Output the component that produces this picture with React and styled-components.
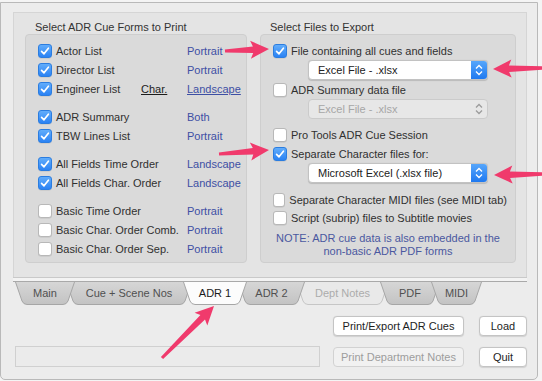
import React from "react";
import styled, { createGlobalStyle } from "styled-components";

const GlobalStyle = createGlobalStyle`
  html, body { margin: 0; padding: 0; background: #f4f4f4; }
  body {
    font-family: "Liberation Sans", Arial, sans-serif;
    font-size: 11px;
    color: #303030;
  }
  #root { width: 542px; height: 381px; overflow: hidden; }
`;

const Page = styled.div`
  position: relative;
  width: 542px;
  height: 381px;
  padding-top: 2px;
  box-sizing: border-box;
`;

const Window = styled.div`
  box-sizing: border-box;
  width: 538px;
  height: 378px;
  background: #ececec;
  border: 1px solid #b9b9b9;
  border-radius: 0 0 5px 5px;
  padding: 9px 10px 0 12px;
  display: flex;
  flex-direction: column;
`;

const Panel = styled.div`
  box-sizing: border-box;
  height: 265px;
  background: #e4e4e4;
  border: 1px solid #d5d5d5;
  border-bottom: none;
  padding: 7px 10px 14px 11px;
  display: flex;
  gap: 13px;
`;

const Column = styled.div`
  display: flex;
  flex-direction: column;
  width: ${(p) => p.$w}px;
`;

const Title = styled.div`
  height: 14px;
  line-height: 14px;
  padding-left: 10px;
  color: #333333;
`;

const GroupBox = styled.div`
  flex: 1;
  box-sizing: border-box;
  background: #dadada;
  border: 1px solid #cecece;
  border-radius: 4px;
  padding: 6px 8px 0 12px;
  display: flex;
  flex-direction: column;
`;

const FormRow = styled.div`
  display: grid;
  grid-template-columns: 18px 85px 46px auto;
  align-items: center;
  height: 19px;
  margin-top: ${(p) => p.$gap || 0}px;
`;

const CheckRow = styled.div`
  display: flex;
  align-items: center;
  gap: 4px;
  height: 19px;
  margin-top: ${(p) => p.$gap || 0}px;
`;

const Box = styled.span`
  box-sizing: border-box;
  width: 14px;
  height: 14px;
  border-radius: 3px;
  display: inline-flex;
  align-items: center;
  justify-content: center;
  background: ${(p) => (p.$on ? "linear-gradient(#62adfb, #2a82f4)" : "#ffffff")};
  border: 1px solid ${(p) => (p.$on ? "#2b7de0" : "#b8b8b8")};
  box-shadow: 0 0.5px 0.5px rgba(0, 0, 0, 0.12);
`;

const Label = styled.span`
  white-space: nowrap;
`;

const Char = styled.span`
  text-decoration: underline;
  color: #1c1c1c;
`;

const Orient = styled.span`
  color: #3d4fa4;
  white-space: nowrap;
  text-decoration: ${(p) => (p.$u ? "underline" : "none")};
`;

const Popup = styled.div`
  box-sizing: border-box;
  width: 180px;
  height: 20px;
  margin-left: 35px;
  margin-top: ${(p) => p.$gap || 0}px;
  display: flex;
  align-items: center;
  border-radius: 4px;
  background: ${(p) => (p.$off ? "#e7e7e7" : "#ffffff")};
  border: 1px solid ${(p) => (p.$off ? "#cbcbcb" : "#c2c2c2")};
  box-shadow: ${(p) => (p.$off ? "none" : "0 0.5px 1px rgba(0,0,0,0.15)")};
  color: ${(p) => (p.$off ? "#a6a6a6" : "#222222")};
  overflow: hidden;
`;

const PopupText = styled.span`
  flex: 1;
  padding-left: 9px;
`;

const Stepper = styled.span`
  width: 16px;
  height: 100%;
  display: flex;
  align-items: center;
  justify-content: center;
  background: ${(p) => (p.$off ? "transparent" : "linear-gradient(#56a6fb, #1f79f0)")};
`;

const Note = styled.div`
  margin-top: 5px;
  line-height: 13px;
  text-align: center;
  color: #4a58a0;
  padding-right: 4px;
`;

const Strip = styled.div`
  height: 3px;
  background: #f3f3f3;
  border-top: 1px solid #c9c9c9;
  border-bottom: 1px solid #a9a9a9;
`;

const TabRow = styled.div`
  display: flex;
  height: 23px;
  padding-left: 2px;
`;

const Tab = styled.div`
  position: relative;
  width: ${(p) => p.$w}px;
  height: 23px;
  margin-left: -9px;
  z-index: ${(p) => p.$z};
  display: flex;
  align-items: center;
  justify-content: center;
  padding-bottom: 1px;
  box-sizing: border-box;
  color: ${(p) => (p.$state === "off" ? "#acacac" : p.$state === "on" ? "#1a1a1a" : "#505050")};
  &:first-child { margin-left: 0; }
  svg { position: absolute; left: 0; top: 0; }
  span { position: relative; }
`;

const Bottom = styled.div`
  display: flex;
  align-items: flex-end;
  gap: 13px;
  padding: 11px 0 0 2px;
`;

const Field = styled.div`
  flex: 1;
  height: 21px;
  box-sizing: border-box;
  background: #ebebeb;
  border: 1px solid #d0d0d0;
`;

const ButtonGrid = styled.div`
  display: grid;
  grid-template-columns: 131px 48px;
  column-gap: 15px;
  row-gap: 11px;
`;

const Button = styled.div`
  box-sizing: border-box;
  height: 20px;
  display: flex;
  align-items: center;
  justify-content: center;
  border-radius: 4px;
  background: ${(p) => (p.$off ? "#f1f1f1" : "#ffffff")};
  border: 1px solid ${(p) => (p.$off ? "#d2d2d2" : "#c4c4c4")};
  box-shadow: ${(p) => (p.$off ? "none" : "0 0.5px 1px rgba(0,0,0,0.12)")};
  color: ${(p) => (p.$off ? "#9d9d9d" : "#1e1e1e")};
`;

const Overlay = styled.svg`
  position: absolute;
  left: 0;
  top: 0;
  pointer-events: none;
`;

function Check({ on }) {
  return (
    <Box $on={on}>
      {on && (
        <svg width="12" height="12" viewBox="0 0 12 12">
          <polyline points="2.6,6.4 5,8.8 9.4,3.2" fill="none" stroke="#fff" strokeWidth="1.7" strokeLinecap="round" strokeLinejoin="round" />
        </svg>
      )}
    </Box>
  );
}

function Select({ text, off, gap }) {
  const c = off ? "#9c9c9c" : "#ffffff";
  return (
    <Popup $off={off} $gap={gap}>
      <PopupText>{text}</PopupText>
      <Stepper $off={off}>
        <svg width="10" height="14" viewBox="0 0 10 14">
          <polyline points="2,5.5 5,2.5 8,5.5" fill="none" stroke={c} strokeWidth="1.3" />
          <polyline points="2,8.5 5,11.5 8,8.5" fill="none" stroke={c} strokeWidth="1.3" />
        </svg>
      </Stepper>
    </Popup>
  );
}

function TabShape({ w, state }) {
  const h = 23;
  const fill = state === "on" ? "#fcfcfc" : state === "off" ? "#e9e9e9" : "url(#tabgrad)";
  const stroke = state === "off" ? "#c6c6c6" : "#a6a6a6";
  const outline = `M0.5,0 L7,${h - 4} Q8.5,${h - 0.5} 12,${h - 0.5} L${w - 12},${h - 0.5} Q${w - 8.5},${h - 0.5} ${w - 7},${h - 4} L${w - 0.5},0`;
  return (
    <svg width={w} height={h} viewBox={`0 0 ${w} ${h}`}>
      <defs>
        <linearGradient id="tabgrad" x1="0" y1="0" x2="0" y2="1">
          <stop offset="0" stopColor="#d6d6d6" />
          <stop offset="1" stopColor="#c3c3c3" />
        </linearGradient>
      </defs>
      <path d={outline + " Z"} fill={fill} />
      <path d={outline} fill="none" stroke={stroke} strokeWidth="1" />
    </svg>
  );
}

function arrowPoints(x1, y1, x2, y2) {
  const dx = x2 - x1;
  const dy = y2 - y1;
  const len = Math.hypot(dx, dy);
  const ux = dx / len;
  const uy = dy / len;
  const px = -uy;
  const py = ux;
  const head = 16;
  const hw = 9;
  const sw = 3.3;
  const tw = 1.6;
  const bx = x2 - ux * head;
  const by = y2 - uy * head;
  const pts = [
    [x1 + px * tw, y1 + py * tw],
    [bx + px * sw, by + py * sw],
    [bx + px * hw - ux * 2.5, by + py * hw - uy * 2.5],
    [x2, y2],
    [bx - px * hw - ux * 2.5, by - py * hw - uy * 2.5],
    [bx - px * sw, by - py * sw],
    [x1 - px * tw, y1 - py * tw],
  ];
  return pts.map((p) => p.map((v) => v.toFixed(1)).join(",")).join(" ");
}

const forms = [
  [
    { label: "Actor List", on: true, orient: "Portrait" },
    { label: "Director List", on: true, orient: "Portrait" },
    { label: "Engineer List", on: true, char: true, orient: "Landscape", u: true },
  ],
  [
    { label: "ADR Summary", on: true, orient: "Both" },
    { label: "TBW Lines List", on: true, orient: "Portrait" },
  ],
  [
    { label: "All Fields Time Order", on: true, orient: "Landscape" },
    { label: "All Fields Char. Order", on: true, orient: "Landscape" },
  ],
  [
    { label: "Basic Time Order", orient: "Portrait" },
    { label: "Basic Char. Order Comb.", orient: "Portrait" },
    { label: "Basic Char. Order Sep.", orient: "Portrait" },
  ],
];

const tabs = [
  { label: "Main", w: 60, z: 3 },
  { label: "Cue + Scene Nos", w: 126, z: 2 },
  { label: "ADR 1", w: 64, z: 10, state: "on" },
  { label: "ADR 2", w: 67, z: 4 },
  { label: "Dept Notes", w: 93, z: 1, state: "off" },
  { label: "PDF", w: 60, z: 2 },
  { label: "MIDI", w: 51, z: 3 },
];

const arrows = [
  [225, 51, 269, 49],
  [543, 68, 493, 69],
  [219, 154, 269, 150],
  [543, 174, 494, 175],
  [162, 358, 214, 306],
];

export default function App() {
  return (
    <Page>
      <GlobalStyle />
      <Window>
        <Panel>
          <Column $w={222}>
            <Title>Select ADR Cue Forms to Print</Title>
            <GroupBox>
              {forms.map((group, gi) =>
                group.map((f, i) => (
                  <FormRow key={f.label} $gap={gi > 0 && i === 0 ? 9 : 0}>
                    <Check on={f.on} />
                    <Label>{f.label}</Label>
                    <span>{f.char && <Char>Char.</Char>}</span>
                    <Orient $u={f.u}>{f.orient}</Orient>
                  </FormRow>
                ))
              )}
            </GroupBox>
          </Column>
          <Column $w={256}>
            <Title>Select Files to Export</Title>
            <GroupBox>
              <CheckRow>
                <Check on />
                <Label>File containing all cues and fields</Label>
              </CheckRow>
              <Select text="Excel File - .xlsx" />
              <CheckRow>
                <Check />
                <Label>ADR Summary data file</Label>
              </CheckRow>
              <Select text="Excel File - .xlsx" off />
              <CheckRow $gap={6}>
                <Check />
                <Label>Pro Tools ADR Cue Session</Label>
              </CheckRow>
              <CheckRow>
                <Check on />
                <Label>Separate Character files for:</Label>
              </CheckRow>
              <Select text="Microsoft Excel (.xlsx file)" />
              <CheckRow $gap={7}>
                <Check />
                <Label>Separate Character MIDI files (see MIDI tab)</Label>
              </CheckRow>
              <CheckRow $gap={-1}>
                <Check />
                <Label>Script (subrip) files to Subtitle movies</Label>
              </CheckRow>
              <Note>
                NOTE: ADR cue data is also embedded in the
                <br />
                non-basic ADR PDF forms
              </Note>
            </GroupBox>
          </Column>
        </Panel>
        <Strip />
        <TabRow>
          {tabs.map((t) => (
            <Tab key={t.label} $w={t.w} $z={t.z} $state={t.state}>
              <TabShape w={t.w} state={t.state} />
              <span>{t.label}</span>
            </Tab>
          ))}
        </TabRow>
        <Bottom>
          <Field />
          <ButtonGrid>
            <Button>Print/Export ADR Cues</Button>
            <Button>Load</Button>
            <Button $off>Print Department Notes</Button>
            <Button>Quit</Button>
          </ButtonGrid>
        </Bottom>
      </Window>
      <Overlay width="542" height="381" viewBox="0 0 542 381">
        {arrows.map((a, i) => (
          <polygon key={i} points={arrowPoints(...a)} fill="#f03a6c" />
        ))}
      </Overlay>
    </Page>
  );
}
